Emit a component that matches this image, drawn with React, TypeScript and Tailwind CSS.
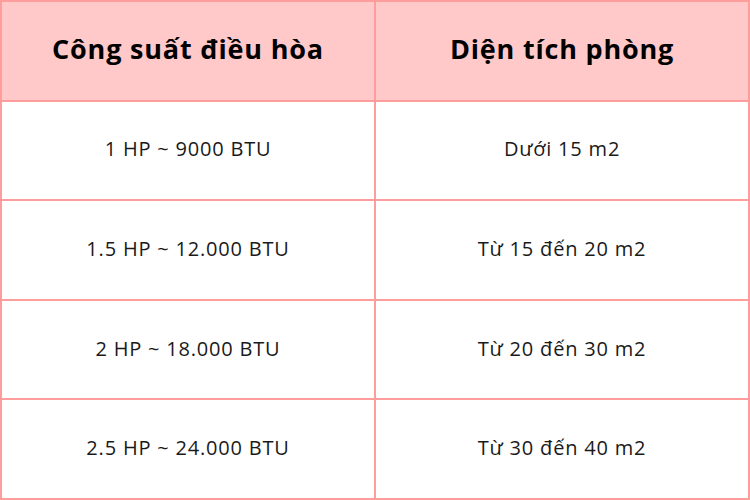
export default function App() {
  const rows = [
    ["1 HP ~ 9000 BTU", "Dưới 15 m2"],
    ["1.5 HP ~ 12.000 BTU", "Từ 15 đến 20 m2"],
    ["2 HP ~ 18.000 BTU", "Từ 20 đến 30 m2"],
    ["2.5 HP ~ 24.000 BTU", "Từ 30 đến 40 m2"],
  ];
  return (
    <div
      className="w-[750px] h-[500px] bg-[#ff9c9c] p-[2px] grid grid-cols-2 grid-rows-5 gap-[2px]"
      style={{ fontFamily: '"Open Sans", "Noto Sans", sans-serif' }}
    >
      <div className="bg-[#ffc9c9] flex items-center justify-center pb-[3px] text-[27px] tracking-[0.8px] font-bold text-black">
        Công suất điều hòa
      </div>
      <div className="bg-[#ffc9c9] flex items-center justify-center pb-[3px] text-[27px] tracking-[0.8px] font-bold text-black">
        Diện tích phòng
      </div>
      {rows.map(([a, b], i) => (
        <>
          <div key={"a" + i} className="bg-white flex items-center justify-center pb-[2px] text-[20px] tracking-[0.8px] text-[#1a1a1a]">
            {a}
          </div>
          <div key={"b" + i} className="bg-white flex items-center justify-center pb-[2px] text-[20px] tracking-[0.8px] text-[#1a1a1a]">
            {b}
          </div>
        </>
      ))}
    </div>
  );
}
